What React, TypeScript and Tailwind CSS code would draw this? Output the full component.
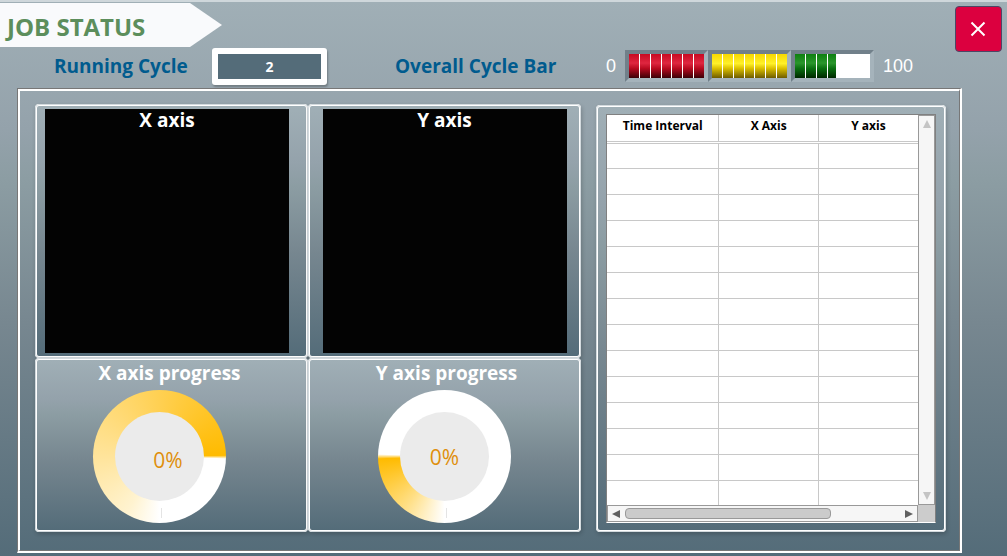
import type { ReactNode } from "react";

const surface =
  "bg-[linear-gradient(to_bottom,#a0afb6_0%,#94a2ab_23%,#8c9da3_32%,#778790_58%,#546c79_100%)]";

function Panel({ children, className = "" }: { children: ReactNode; className?: string }) {
  return (
    <section
      className={`rounded-[4px] border-2 border-white shadow-[1px_2px_4px_rgba(0,0,0,0.2)] outline outline-1 -outline-offset-1 outline-[#d3dade] ${surface} ${className}`}
    >
      {children}
    </section>
  );
}

function Plot({ title, className = "" }: { title: string; className?: string }) {
  return (
    <Panel className={`flex h-[254px] justify-center pt-[3px] ${className}`}>
      <div className="size-[244px] bg-[#030303] text-center">
        <h2 className="text-[19px] leading-[22px] font-bold text-white">{title}</h2>
      </div>
    </Panel>
  );
}

function Gauge({
  title,
  ring,
  className = "",
  valueClass = "",
}: {
  title: string;
  ring: string;
  className?: string;
  valueClass?: string;
}) {
  return (
    <Panel className={`flex h-[174px] flex-col items-center ${className}`}>
      <h2 className="text-[19px] leading-[26px] font-bold text-white">{title}</h2>
      <div className={ring}>
        <div className="grid size-[133px] place-items-center rounded-full">
          <div
            className={`flex size-[89px] items-center justify-center rounded-full bg-[#ebebeb] text-[21px] leading-6 text-[#df8f0b] ${valueClass}`}
          >
            0%
          </div>
        </div>
        <span className="absolute bottom-[5px] left-[68px] h-[10px] w-px bg-[#e4e4e4]" />
      </div>
    </Panel>
  );
}

function Segment({ fill, count }: { fill: string; count: number }) {
  return (
    <div className="h-8 w-[83px] border-4 border-t-[#71808a] border-r-[#a5b3bb] border-b-[#a5b3bb] border-l-[#71808a] bg-white">
      <div className="flex h-full gap-px">
        {Array.from({ length: count }, (_, i) => (
          <span key={i} className={`h-full w-[10px] ${count < 7 ? "last:w-2" : ""} ${fill}`} />
        ))}
      </div>
    </div>
  );
}

const rows = Array.from({ length: 14 }, (_, i) => i);

export default function App() {
  return (
    <div
      className={`flex min-h-screen flex-col border-t-2 border-[#cfd7db] pb-[3px] font-['Open_Sans','Noto_Sans',sans-serif] ${surface}`}
    >
      <header className="flex items-start justify-between pr-[5px]">
        <div>
          <h1 className="mt-px flex h-11 w-[222px] items-center bg-[#f9fafc] pt-1 pl-[7px] text-[24px] font-bold text-[#5c8e5c] [clip-path:polygon(0_0,190px_0,100%_50%,190px_100%,0_100%)]">
            JOB STATUS
          </h1>
          <div className="mb-[3px] flex h-[38px] items-center">
            <label
              htmlFor="cycle"
              className="w-[158px] pl-[54px] text-[19px] leading-6 font-bold whitespace-nowrap text-[#005b8e]"
            >
              Running Cycle
            </label>
            <input
              id="cycle"
              readOnly
              value="2"
              className="ml-[54px] h-[37px] w-[115px] rounded-[3px] border-[6px] border-white bg-[#546c79] text-center text-[14px] font-bold text-white shadow-[1px_2px_2px_rgba(0,0,0,0.25)] outline-none"
            />
            <span className="ml-[68px] w-[211px] text-[19px] leading-6 font-bold whitespace-nowrap text-[#005b8e]">
              Overall Cycle Bar
            </span>
            <span className="font-['Liberation_Sans',sans-serif] text-[18px] text-white">0</span>
            <div className="ml-[9px] flex" role="img" aria-label="Overall cycle">
              <Segment fill="bg-[linear-gradient(#c80a22,#df2640_38%,#b80a20_60%,#3c0006)]" count={7} />
              <Segment fill="bg-[linear-gradient(#f7d800,#fff02a_40%,#dcc000_60%,#6e5c00)]" count={7} />
              <Segment fill="bg-[linear-gradient(#0d8010,#2a962c_38%,#0a7010_60%,#002800)]" count={4} />
            </div>
            <span className="ml-[9px] font-['Liberation_Sans',sans-serif] text-[18px] text-white">100</span>
          </div>
        </div>
        <button
          type="button"
          aria-label="Close"
          className="mt-1 grid h-[46px] w-[47px] place-items-center rounded-[4px] border border-[#4c4766] bg-[#dc003f]"
        >
          <svg width="16" height="16" viewBox="0 0 16 16" className="mr-px mb-px stroke-white stroke-2">
            <path d="M1.5 1.5l13 13M14.5 1.5l-13 13" />
          </svg>
        </button>
      </header>

      <main className="mr-[45px] ml-[17px] flex grow flex-col border-t border-r-2 border-b-2 border-l border-t-[#777777] border-r-white border-b-white border-l-[#777777]">
        <div className="grid grow grid-cols-[546fr_350fr] items-start gap-[15px] border-t-2 border-r border-b border-l-2 border-t-white border-r-[#777777] border-b-[#777777] border-l-white pt-[13px] pr-[13px] pl-[15px]">
          <div className="grid grid-cols-2">
            <Plot title="X axis" className="pr-[9px]" />
            <Plot title="Y axis" />
            <Gauge
              title="X axis progress"
              className="[&>h2]:pr-1"
              ring="relative mt-1 mr-6 rounded-full bg-[conic-gradient(from_180deg,#ffffff_0deg,#fff3d0_30deg,#ffe49b_90deg,#ffd052_180deg,#ffbb00_269deg,#ffffff_272deg)]"
              valueClass="pt-1.5 pl-[17px]"
            />
            <Gauge
              title="Y axis progress"
              className="[&>h2]:pl-1"
              ring="relative mt-1 rounded-full bg-[conic-gradient(from_180deg,#ffffff_0deg,#ffdf85_38deg,#ffbb00_88deg,#ffffff_92deg)]"
            />
          </div>

          <Panel className="mt-px px-2 pt-[7px] pb-[7px]">
            <div className="grid grid-cols-[1fr_17px] grid-rows-[390px_17px] border border-[#808080] border-b-white bg-white">
              <table className="h-[390px] w-full table-fixed border-collapse">
                <colgroup>
                  <col className="w-[36%]" />
                  <col className="w-[32%]" />
                  <col className="w-[32%]" />
                </colgroup>
                <thead>
                  <tr className="h-[27px] border-b-3 border-double border-[#c8c8c8] text-[12px] leading-4 font-bold text-black">
                    <th className="border-r border-solid border-r-[#c8c8c8] pb-1">Time Interval</th>
                    <th className="border-r border-solid border-r-[#c8c8c8] pb-1">X Axis</th>
                    <th className="pb-1">Y axis</th>
                  </tr>
                </thead>
                <tbody>
                  {rows.map((r) => (
                    <tr key={r} className="h-[26px] border-b border-[#c8c8c8] last:border-b-0">
                      <td className="border-r border-[#c8c8c8]" />
                      <td className="border-r border-[#c8c8c8]" />
                      <td />
                    </tr>
                  ))}
                </tbody>
              </table>
              <div className="flex flex-col items-center justify-between border border-[#999999] bg-[#f6f6f6] py-1">
                <button type="button" aria-label="Scroll up">
                  <svg width="8" height="8" className="fill-[#c4c4c4]"><path d="M4 0L8 8H0z" /></svg>
                </button>
                <button type="button" aria-label="Scroll down">
                  <svg width="8" height="8" className="fill-[#c4c4c4]"><path d="M0 0H8L4 8z" /></svg>
                </button>
              </div>
              <div className="flex items-center gap-[5px] border border-[#999999] bg-[#f6f6f6] px-1">
                <button type="button" aria-label="Scroll left">
                  <svg width="8" height="8" className="fill-[#606060]"><path d="M0 4L8 0V8z" /></svg>
                </button>
                <div className="flex grow">
                  <div className="h-[11px] w-[75%] rounded-[4px] border border-[#999999] bg-[#cbcbcb]" />
                </div>
                <button type="button" aria-label="Scroll right">
                  <svg width="8" height="8" className="fill-[#606060]"><path d="M8 4L0 0V8z" /></svg>
                </button>
              </div>
              <div className="bg-[#cccccc]" />
            </div>
          </Panel>
        </div>
      </main>
    </div>
  );
}
